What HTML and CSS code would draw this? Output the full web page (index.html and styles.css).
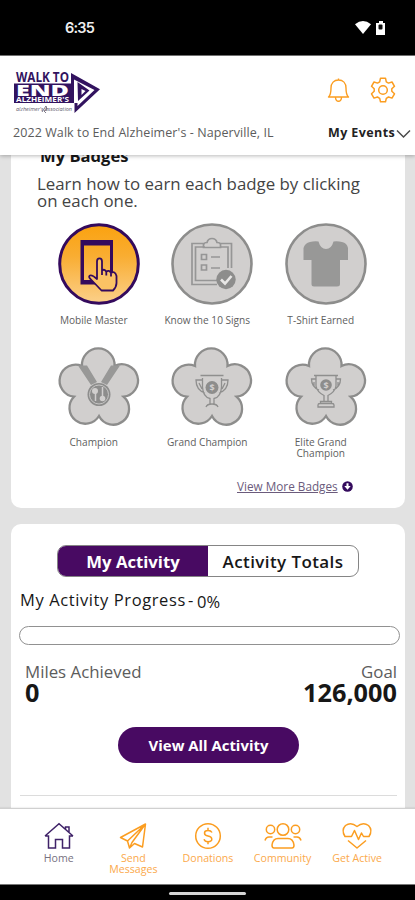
FILE: index.html
```html
<!DOCTYPE html>
<html lang="en">
<head>
<meta charset="utf-8">
<title>Walk to End Alzheimer's</title>
<link rel="stylesheet" href="styles.css">
</head>
<body>
<div class="status">
  <span class="time">6:35</span>
  <svg class="status-icons" width="34" height="18" viewBox="0 0 34 18"><path d="M1 4.200Q9-2 17 4.200L9 14Z" fill="#fff"/><path d="M25 1h4v2h2v12h-9V3h3z" fill="#fff"/><rect x="24.500" y="4.500" width="4" height="5" rx="1" fill="#111"/></svg>
</div>
<header class="header">
  <div class="brand-row">
    <svg class="logo" width="88" height="46" viewBox="0 0 88 46">
      <g fill="#32135f">
        <text class="logo-text" x="3" y="12" font-size="14" textLength="53" lengthAdjust="spacingAndGlyphs">WALK TO</text>
        <path d="M1 13.500H59V33H1z"/>
        <path fill-rule="evenodd" d="M58 3L87 19.300 61.500 43V33H58ZM61 9.500V33H64.500V36L81.500 20Z"/>
        <path fill-rule="evenodd" d="M64.500 12L76.500 20.500 65 31ZM68.500 19V25L72.500 21Z"/>
      </g>
      <text class="logo-text logo-end" x="3" y="26" font-size="15.500" textLength="53" lengthAdjust="spacingAndGlyphs" fill="#fff">END</text>
      <text class="logo-text" x="3" y="32.300" font-size="6.500" textLength="53" lengthAdjust="spacingAndGlyphs" fill="#fff">ALZHEIMER'S</text>
      <text class="logo-sub" x="3" y="41" font-size="4.500" textLength="56" lengthAdjust="spacingAndGlyphs" fill="#605a6c">alzheimer's association</text>
      <path d="M29 42l4-6 1 3-3 2 2 2" fill="none" stroke="#605a6c" stroke-width=".8"/>
    </svg>
    <div class="tools">
      <svg width="23" height="26" viewBox="0 0 23 26" fill="none" stroke="#fb9d20" stroke-width="1.400" stroke-linejoin="round"><path d="M11.500 1.500V3M1.500 20C4 18 4 15 4 11 4 6 7 3 11.500 3S19 6 19 11C19 15 19 18 21.500 20ZM8.500 20.500Q8.800 24.300 11.500 24.300T14.500 20.500"/></svg>
      <svg width="26" height="26" viewBox="0 0 26 26" fill="none" stroke="#fb9d20" stroke-width="1.500" stroke-linejoin="round"><path d="M10.500 1.200h5l.8 3.600 2.200 1.300 3.500-1.100 2.500 4.300-2.700 2.500v2.500l2.700 2.500-2.500 4.300-3.500-1.100-2.200 1.300-.8 3.500h-5l-.8-3.500L7.500 20 4 21.100 1.500 16.800l2.700-2.500v-2.500L1.500 9.300 4 5l3.500 1.100 2.200-1.300z"/><circle cx="13" cy="13" r="4.300"/></svg>
    </div>
  </div>
  <div class="event-row">
    <span class="event">2022 Walk to End Alzheimer's - Naperville, IL</span>
    <span class="my-events">My Events</span>
    <svg width="15" height="10" viewBox="0 0 15 10" fill="none" stroke="#4a4a4a" stroke-width="1.500"><path d="M1 1.500L7.500 8 14 1.500"/></svg>
  </div>
</header>
<main class="main">
  <section class="card badges">
    <h2><span>My Badges</span></h2>
    <p class="intro"><span>Learn how to earn each badge by clicking</span><br><span>on each one.</span></p>
    <div class="grid">
      <div class="badge">
        <svg width="82" height="82" viewBox="0 0 82 82"><defs><linearGradient id="gold" x2="0" y2="1"><stop stop-color="#fba20f"/><stop offset=".4" stop-color="#f9ad32"/><stop offset="1" stop-color="#fbd08a"/></linearGradient></defs><circle cx="41" cy="41" r="39.300" fill="url(#gold)" stroke="#340a5d" stroke-width="3"/><path fill="#340a5d" fill-rule="evenodd" d="M22.500 17H55V61.500H22.500ZM26 22.500V57H52V22.500Z"/><path d="M39 53V38.500Q39 35.300 41.500 35.300T44 38.500V47.500Q46.500 45.500 48.300 48.800 51 46.500 53 50 57 47.500 58.500 53V60Q58.500 64 55 67.500H43.500L32.500 56Q30 53.500 32 52.500T39 56ZM44 47v5M48.300 48.500v4M53 50v3.500" fill="#fbc264" stroke="#340a5d" stroke-width="1.800" stroke-linejoin="round"/></svg>
        <span>Mobile Master</span>
      </div>
      <div class="badge">
        <svg width="82" height="82" viewBox="0 0 82 82" fill="none" stroke="#969696" stroke-width="1.700"><circle cx="41" cy="41" r="39.500" fill="#d1cfce" stroke="#8d8d8c" stroke-width="2.600"/><path d="M34 20.500H21V61.500H46M34 24H24.500V57.500H46M49 20.500H60.500V45M49 24H57V45M32.500 24.500V21.500Q33 19.500 36 19.500 37 15.500 41 15.500T46 19.500Q49.500 19.500 49.500 21.500V24.500Z"/><path d="M30.500 31.500h5v5h-5zM30.500 42h5v5h-5zM40 34h9M40 45h9"/><circle cx="55" cy="56.500" r="9.700" fill="#8d8d8c" stroke="none"/><path d="M50 56.500l4 4 6.500-7.500" stroke="#e8e7e6" stroke-width="2.600"/></svg>
        <span>Know the 10 Signs</span>
      </div>
      <div class="badge">
        <svg width="82" height="82" viewBox="0 0 82 82"><circle cx="41" cy="41" r="39.500" fill="#d1cfce" stroke="#8d8d8c" stroke-width="2.600"/><path d="M25 19Q29 18 33.500 18.500 35.500 26 41 26T48.500 18.500Q53 18 57 19 62 20 63 25V37H55V61Q55 63.500 52 63.500H29Q26.500 63.500 26.500 61V37H18.500V25Q20 20 25 19Z" fill="#989897"/></svg>
        <span>T-Shirt Earned</span>
      </div>
      <div class="badge">
        <svg width="82" height="80" viewBox="0 0 82 80"><path id="flower" d="M24 19A16.300 16.300 0 1 1 56.500 19A16.250 16.250 0 1 1 65.500 49.700A15.900 15.900 0 1 1 41 69A15.900 15.900 0 1 1 16 49.700A16.050 16.050 0 1 1 24 19Z" fill="#d1cfce" stroke="#8d8d8c" stroke-width="2.300"/><path d="M20 18.500L33 38l6-3L29 18.500ZM62 18.500L49 38l-6-3L53 18.500Z" fill="#989897"/><circle cx="41" cy="47.500" r="11.500" fill="#8d8d8c"/><circle cx="41" cy="47.500" r="9.500" fill="none" stroke="#c7c6c5"/><circle cx="37" cy="44" r="3" fill="#d1cfce"/><circle cx="44.500" cy="51.500" r="2.800" fill="#d1cfce"/><path d="M37.500 46V54M44.500 40V49" fill="none" stroke="#d1cfce" stroke-width="1.500"/></svg>
        <span>Champion</span>
      </div>
      <div class="badge">
        <svg width="82" height="80" viewBox="0 0 82 80"><use href="#flower"/><g fill="none" stroke="#8f8f8e" stroke-width="1.300"><path d="M29.500 28.500H52.500M31.500 31V40Q32 50 39 51.500V56.500M50.500 31V40Q50 50 43 51.500V56.500M35 60Q36 57 41 57T47 60M31 33H25Q25 43 34 46M51 33H57Q57 43 48 46M28 36l3 6M54 36l-3 6"/></g><circle cx="41" cy="40.500" r="6.500" fill="#8d8d8c"/><text class="coin" x="41" y="44">$</text></svg>
        <span>Grand Champion</span>
      </div>
      <div class="badge">
        <svg width="82" height="80" viewBox="0 0 82 80"><use href="#flower"/><g fill="none" stroke="#8f8f8e" stroke-width="1.300"><path d="M29 28.500H53M31 28.500V39Q32 45 39 48.500V54M51 28.500V39Q50 45 43 48.500V54M35.500 56.500V54.500H46.500V56.500M33 60V58Q33 56.500 35 56.500H47Q49 56.500 49 58V60ZM31 32H26.500Q26.500 40 34 43M51 32H55.500Q55.500 40 48 43M29 35v4M53 35v4"/></g><circle cx="41" cy="38" r="5.800" fill="#8d8d8c"/><text class="coin" x="41" y="41.500">$</text></svg>
        <span>Elite Grand<br>Champion</span>
      </div>
    </div>
    <div class="more"><a class="more-link">View More Badges</a><svg width="11" height="11" viewBox="0 0 11 11"><circle cx="5.500" cy="5.500" r="5.300" fill="#340a5d"/><path d="M4.500 2.300h2v2.600h2.200L5.500 8.700 2.300 4.900h2.200z" fill="#fff"/></svg></div>
  </section>
  <section class="card activity">
    <div class="tabs"><div class="tab on"><span>My Activity</span></div><div class="tab"><span>Activity Totals</span></div></div>
    <div class="progress-title"><span class="pt">My Activity Progress</span><span class="dash">-</span><span class="pct">0%</span></div>
    <div class="bar"></div>
    <div class="stats">
      <div><div class="cap">Miles Achieved</div><div class="num">0</div></div>
      <div class="right"><div class="cap">Goal</div><div class="num">126,000</div></div>
    </div>
    <div class="button"><span>View All Activity</span></div>
    <div class="rule"></div>
  </section>
</main>
<nav class="nav">
  <div class="item home"><svg width="30" height="28" viewBox="0 0 30 28" fill="none" stroke="#3f2268" stroke-width="1.500"><path d="M1 14L15 1.800 29 14M1 14H4.500V26H11.500V17.500H18.500V26H25.500V14H29M21.500 7V5H25V10.500"/></svg><span>Home</span></div>
  <div class="item"><svg width="30" height="28" viewBox="0 0 30 28" fill="none" stroke="#fb9d20" stroke-width="1.500" stroke-linejoin="round"><path d="M2.500 15.500L27.500 2 24.500 25 16.500 21.500 11.500 26 9.500 19ZM27.500 2L9.500 19M27.500 2L14 20.500 11.500 26"/></svg><span>Send<br>Messages</span></div>
  <div class="item"><svg width="30" height="28" viewBox="0 0 30 28" fill="none" stroke="#fb9d20" stroke-width="1.500"><circle cx="15" cy="14" r="12.300"/><path d="M19 10.500Q18 8.500 15 8.500 11.500 8.500 11.500 11T15 14 18.800 17 15 19.700Q11.800 19.700 11 17.200M15 5.800V8.500M15 19.700V22.300"/></svg><span>Donations</span></div>
  <div class="item"><svg width="38" height="28" viewBox="0 0 38 28" fill="none" stroke="#fb9d20" stroke-width="1.500"><circle cx="19" cy="7.500" r="5.800"/><circle cx="6.500" cy="7.500" r="4.200"/><circle cx="31.500" cy="7.500" r="4.200"/><path d="M10 26Q8 26 8 23 9 16.500 14 16.500H24Q29 16.500 30 23 30 26 28 26ZM1 18.500Q2 15 5 15H8.500M37 18.500Q36 15 33 15H29.500"/></svg><span>Community</span></div>
  <div class="item"><svg width="30" height="28" viewBox="0 0 30 28" fill="none" stroke="#fb9d20" stroke-width="1.500" stroke-linejoin="round"><path d="M3 14.500Q-1 8 3.500 3.500 9-.5 15 4.500 21-.5 26.500 3.500 31 8 27 14.500H21.500L19.500 11 16.500 17.500 12.500 8.500 9.500 14.500ZM6 18.500L15 26 24 18.500"/></svg><span>Get Active</span></div>
</nav>
<div class="home-indicator"><i></i></div>
</body>
</html>
```
FILE: styles.css
```css
* { box-sizing: border-box; }
body {
  margin: 0;
  width: 415px;
  height: 900px;
  overflow: hidden;
  display: flex;
  flex-direction: column;
  background: #e2e2e2;
  font-family: "Open Sans", "Noto Sans", sans-serif;
  color: #171717;
}
span, a { white-space: nowrap; }
svg { display: block; flex: none; overflow: visible; }

.status {
  height: 56px;
  flex: none;
  background: #000;
  border-bottom: 1px solid #777;
  display: flex;
  justify-content: space-between;
  padding: 19px 27px 0 65px;
}
.time { color: #eee; font: 600 14.5px/18px Inter, sans-serif; letter-spacing: -.8px; }
.status-icons { margin-top: 1px; }

.header {
  height: 99px;
  flex: none;
  background: #fff;
  position: relative;
  box-shadow: 0 1px 4px rgba(0, 0, 0, .28);
  padding: 14px 4px 0 13px;
}
.brand-row { display: flex; justify-content: space-between; height: 53px; }
.logo { margin-left: -.5px; }
.logo-text { font-family: "Open Sans", sans-serif; font-weight: 700; }
.logo-end { font-weight: 800; }
.logo-sub { font-family: "Open Sans", sans-serif; font-style: italic; }
.tools { display: flex; gap: 20px; padding: 7px 15px 0 0; }
.event-row { display: flex; align-items: center; height: 18px; }
.event { font-size: 12.500px; letter-spacing: .08px; color: #5c5c5c; width: 315px; flex: none; }
.my-events { font-size: 12.500px; letter-spacing: .4px; font-weight: 700; width: 68px; flex: none; color: #222; }
.event-row svg { margin-top: 3px; }

.main { height: 653px; flex: none; overflow: hidden; padding: 0 10px 0 11px; }
.card { background: #fff; }
.badges { display: flow-root; height: 353px; border-radius: 0 0 10px 10px; padding: 0 0 0 26px; }
h2 { display: flow-root; margin: 0 0 0 3px; height: 20px; font-size: 16.600px; line-height: 20px; font-weight: 700; }
h2 span { display: block; margin-top: -9px; }
.intro { margin: 0; font-size: 16.850px; line-height: 17px; color: #444; height: 48px; }
.grid { display: grid; grid-template-columns: repeat(3, 113.500px); grid-template-rows: 124px 119px; }
.badge { display: flex; flex-direction: column; align-items: center; font-size: 10.100px; line-height: 10.500px; text-align: center; color: #606060; }
.badge svg { margin-left: 10px; }
.badge span { margin-top: 10px; }
.coin { font: 700 9px "Open Sans", sans-serif; fill: #d1cfce; text-anchor: middle; }
.more { display: flex; align-items: center; gap: 4px; margin: 12px 0 0 200px; height: 16px; }
.more-link { font-size: 11.750px; color: #6b5b7c; text-decoration: underline; }

.activity { margin-top: 16px; height: 290px; border-radius: 10px 10px 0 0; padding: 21px 6px 0 9px; }
.tabs { display: flex; width: 302px; height: 32px; margin-left: 37px; border: 1px solid #858585; border-radius: 9px; overflow: hidden; }
.tab { width: 50%; display: flex; align-items: center; justify-content: center; font-size: 17px; font-weight: 600; letter-spacing: .4px; }
.tab.on { background: #480a62; color: #fff; font-weight: 700; font-size: 16.700px; letter-spacing: 0; }
.progress-title { display: flex; height: 49px; padding-top: 13px; line-height: 20px; font-size: 16.500px; font-weight: 500; }
.pt { width: 168px; letter-spacing: .6px; }
.dash { width: 9px; }
.pct { padding-top: 2px; font-weight: 400; }
.bar { height: 19px; width: 381px; margin-left: -1px; border: 1px solid #919191; border-radius: 10px; }
.stats { display: flex; justify-content: space-between; padding: 16px 2px 0 5px; height: 82px; }
.right { text-align: right; }
.cap { font-size: 16.850px; line-height: 21px; color: #5c5c5c; }
.num { font-size: 25.300px; line-height: 21px; font-weight: 700; }
.button { width: 181px; height: 36px; margin-left: 98px; border-radius: 18px; background: #480a62; color: #fff; display: flex; align-items: center; justify-content: center; font-size: 14.900px; font-weight: 700; }
.rule { margin-top: 32px; height: 1px; background: #dcdcdc; width: 377px; }

.nav { height: 76px; flex: none; background: #fff; position: relative; border-top: 1px solid #d0d0d0; box-shadow: 0 -1px 1px rgba(0, 0, 0, .05); display: flex; padding: 13px 0 0 21.500px; }
.item { width: 74.600px; display: flex; flex-direction: column; align-items: center; font-size: 10.600px; line-height: 11px; text-align: center; color: #fba94b; }
.item span { margin-top: 3px; }
.home { color: #77717f; }
.home-indicator { flex: 1; background: #000; border-top: 1px solid #777; display: flex; justify-content: center; padding-top: 7px; }
.home-indicator i { width: 77px; height: 3px; border-radius: 2px; background: #d5d5d5; }
```
